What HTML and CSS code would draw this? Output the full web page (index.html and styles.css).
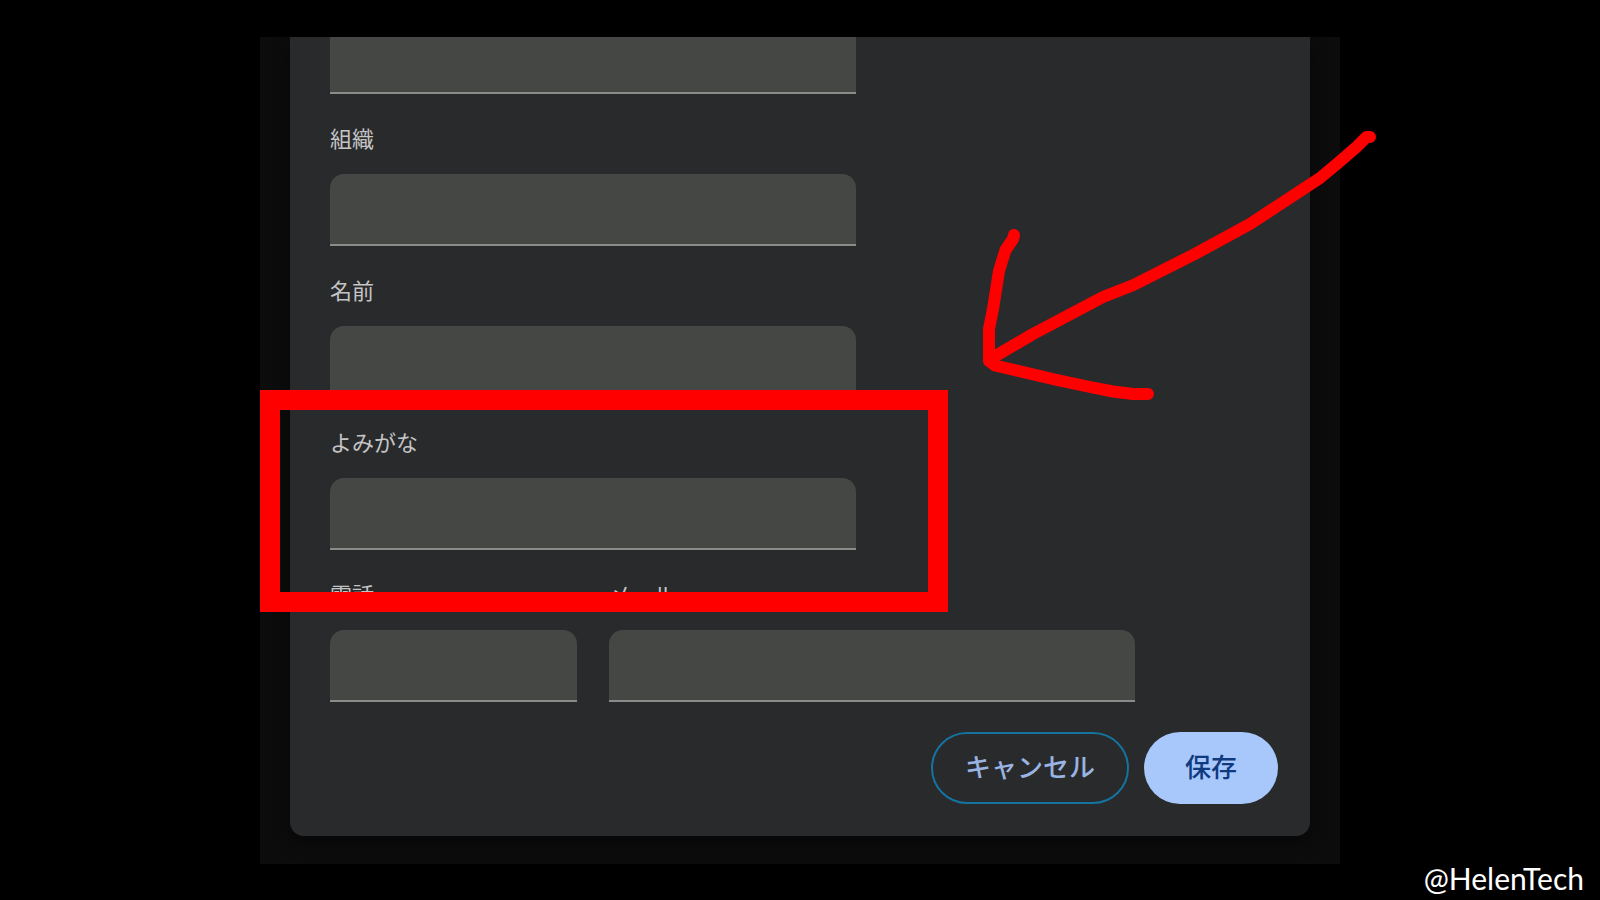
FILE: index.html
```html
<!DOCTYPE html>
<html lang="ja">
<head>
<meta charset="utf-8">
<meta name="viewport" content="width=device-width, initial-scale=1">
<title>住所の編集</title>
<link rel="stylesheet" href="styles.css">
</head>
<body>
<main class="frame">
  <form class="dialog">
    <input class="input input-cut" type="text" aria-label="住所">
    <div class="field">
      <label class="label" for="org">組織</label>
      <input class="input" id="org" type="text">
    </div>
    <div class="field">
      <label class="label" for="name">名前</label>
      <input class="input" id="name" type="text">
    </div>
    <div class="field">
      <label class="label" for="reading">よみがな</label>
      <input class="input" id="reading" type="text">
    </div>
    <div class="row">
      <div class="field field-short">
        <label class="label" for="tel">電話</label>
        <input class="input" id="tel" type="tel">
      </div>
      <div class="field field-long">
        <label class="label" for="mail">メール</label>
        <input class="input" id="mail" type="email">
      </div>
    </div>
    <div class="actions">
      <button class="button button-outline" type="button">キャンセル</button>
      <button class="button button-filled" type="submit">保存</button>
    </div>
  </form>
  <div class="highlight"></div>
  <svg class="arrow" viewBox="260 37 1080 827" aria-hidden="true">
    <path d="M1370 137H1366.500L1356.500 147L1338 163L1320 178L1285 201L1250 224L1193 255L1133.500 285L1103 297L1033 334L992 358"/>
    <path d="M1014 235L1013 239L1005.500 250L999 271L993 309L989 329V361L995 365.500L1057 380L1090 387L1113 391.500L1133 394H1148"/>
  </svg>
</main>
<footer class="credit">@HelenTech</footer>
</body>
</html>
```
FILE: styles.css
```css
* {
  box-sizing: border-box;
}

body {
  margin: 0;
  padding-top: 37px;
  background: #000;
  color: #c4c4c4;
  font-family: "Noto Sans CJK JP", sans-serif;
}

.frame {
  position: relative;
  width: 68%;
  max-width: 1080px;
  margin: 0 auto;
  padding: 0 30px 28px;
  background: #0c0c0c;
}

.dialog {
  padding: 0 32px 32px 40px;
  border-radius: 0 0 14px 14px;
  background: #292a2c;
  box-shadow: 0 8px 16px #080808;
  clip-path: inset(0 -30px -28px);
}

.field {
  max-width: 526px;
}

.label {
  display: block;
  padding: 27px 0 21px;
  font-size: 22px;
  line-height: 32px;
}

.input {
  display: block;
  width: 100%;
  height: 72px;
  padding: 0 16px;
  border: 0;
  border-bottom: 2px solid #8a8c8a;
  border-radius: 0;
  background: #454745;
  color: #e3e3e3;
  font: inherit;
  font-size: 24px;
  outline: 0;
  clip-path: inset(0 round 14px 14px 0 0);
}

.input-cut {
  max-width: 526px;
  height: 57px;
  clip-path: none;
}

.row {
  display: flex;
  gap: 32px;
}

.field-short {
  flex: 0 1 247px;
}

.field-long {
  flex: 0 1 526px;
}

.actions {
  display: flex;
  justify-content: flex-end;
  gap: 15px;
  padding-top: 30px;
}

.button {
  height: 72px;
  border: 0;
  border-radius: 36px;
  font: inherit;
  font-size: 26px;
  font-weight: 500;
  line-height: 32px;
}

.button-outline {
  padding: 0 32px 4px;
  border: 2px solid #14739f;
  background: transparent;
  color: #9ab4e2;
}

.button-filled {
  padding: 0 41px 4px;
  background: #a8c7fa;
  color: #103a80;
}

.highlight {
  position: absolute;
  top: 353px;
  left: 0;
  width: 688px;
  max-width: 100%;
  height: 222px;
  border: 20px solid #f00;
}

.arrow {
  position: absolute;
  inset: 0;
  width: 100%;
  height: 100%;
  overflow: visible;
  fill: none;
  stroke: #f00;
  stroke-width: 12;
  stroke-linecap: round;
  stroke-linejoin: round;
  pointer-events: none;
}

.credit {
  padding: 0 16px 8px;
  color: #fff;
  font-family: Lato, sans-serif;
  font-size: 30px;
  line-height: 28px;
  text-align: right;
}
```
